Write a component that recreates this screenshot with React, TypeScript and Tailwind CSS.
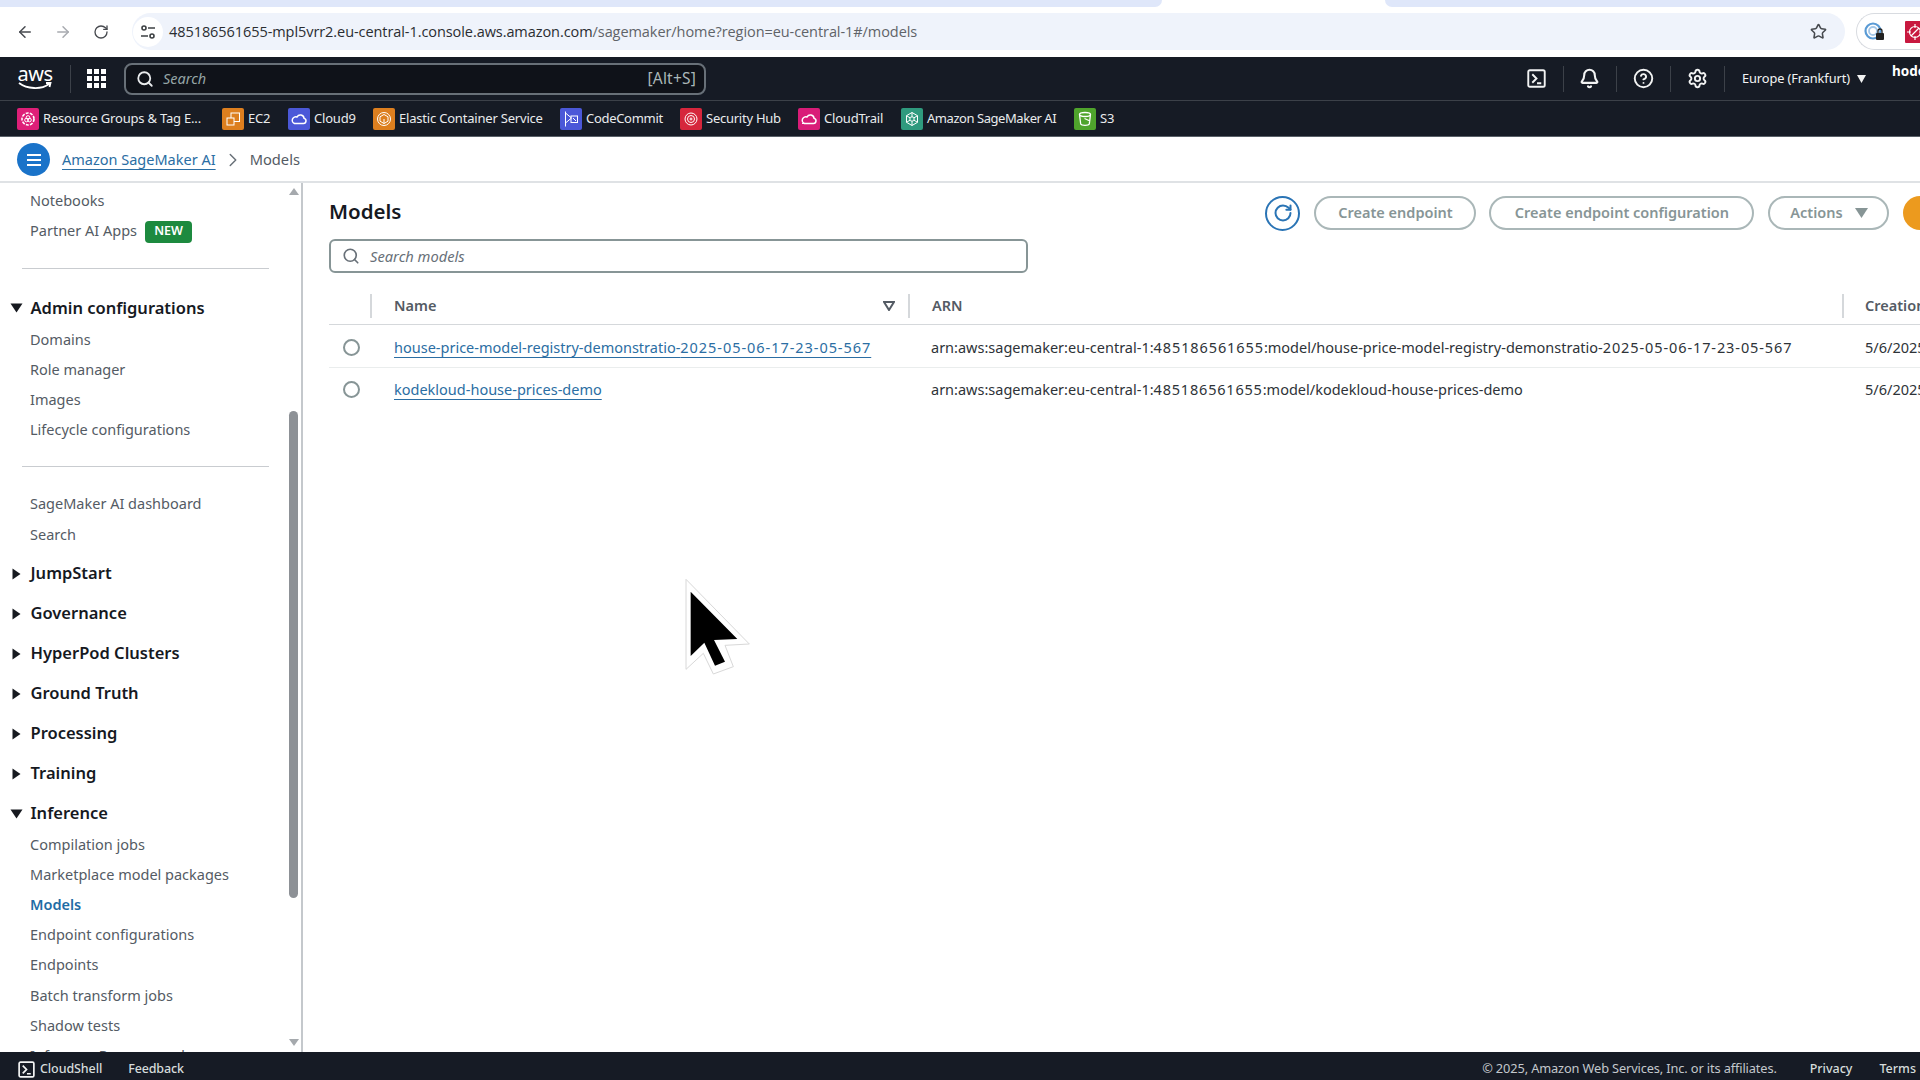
import React from "react";
import { ArrowLeft, ArrowRight, RotateCw, Star, Search, Bell, CircleHelp, Settings, ChevronRight } from "lucide-react";

const F = { fontFamily: "'Noto Sans', sans-serif" };

function Tune() {
  return (
    <svg width="18" height="18" viewBox="0 0 18 18" fill="none" stroke="#3c4043" strokeWidth="1.6">
      <circle cx="5" cy="5" r="2" />
      <path d="M9 5h7M2 13h7" />
      <circle cx="13" cy="13" r="2" />
    </svg>
  );
}

function TermIcon({ size = 18 }: { size?: number }) {
  return (
    <svg width={size} height={size} viewBox="0 0 18 18" fill="none" stroke="#f2f3f3" strokeWidth="1.8">
      <rect x="1.2" y="1.2" width="15.6" height="15.6" rx="1.5" />
      <path d="M5 5l4 4-4 4M9.5 13.500h4" />
    </svg>
  );
}

const cloud = "M6.500 15.500h9a2.600 2.600 0 0 0 .6-5.100A3.800 3.800 0 0 0 9 9a3.200 3.200 0 0 0-2.500 6.500z";

const favs: { label: string; c: string; w: number; gap: number; track: string; glyph: React.ReactNode }[] = [
  { label: "Resource Groups & Tag E...", c: "#de1f78", w: 158, gap: 21, track: "tracking-[-0.2px]", glyph: <g><circle cx="11" cy="11" r="6" strokeDasharray="3 1.200" strokeWidth="1.600" /><circle cx="9.500" cy="12" r="1.800" /><circle cx="12.500" cy="12" r="1.800" /><circle cx="11" cy="9.500" r="1.800" /></g> },
  { label: "EC2", c: "#dd7f1f", w: 22, gap: 18, track: "tracking-[-0.2px]", glyph: <g><rect x="9" y="5" width="8.500" height="8.500" /><rect x="5" y="10" width="7" height="7" fill="#dd7f1f" /></g> },
  { label: "Cloud9", c: "#4b58d8", w: 41, gap: 18, track: "tracking-[-0.2px]", glyph: <path d={cloud} strokeWidth="1.500" /> },
  { label: "Elastic Container Service", c: "#dd7f1f", w: 145, gap: 16, track: "tracking-[-0.2px]", glyph: <g><circle cx="11" cy="11" r="6.500" /><path d="M11 6.500l4 2.300v4.400l-4 2.300-4-2.300V8.800z" /><path d="M11 11v4.500" /></g> },
  { label: "CodeCommit", c: "#4b58d8", w: 77, gap: 17, track: "tracking-[-0.3px]", glyph: <g><path d="M5.500 3.500v15M5.500 5l6 5-6 5" /><rect x="11" y="8" width="6.500" height="6.500" /><path d="M13 10l3 3" /></g> },
  { label: "Security Hub", c: "#d6263c", w: 75, gap: 17, track: "tracking-[-0.25px]", glyph: <g><circle cx="11" cy="11" r="6" /><circle cx="11" cy="11" r="3.500" /><circle cx="11" cy="11" r="1" /></g> },
  { label: "CloudTrail", c: "#d91c78", w: 60, gap: 17, track: "tracking-[-0.2px]", glyph: <g><path d={cloud} strokeWidth="1.500" /><path d="M4 15.500h3" /></g> },
  { label: "Amazon SageMaker AI", c: "#2f9a7e", w: 131, gap: 16, track: "tracking-[-0.45px]", glyph: <g><path d="M11 4.500l5.500 3.200v6.600L11 17.500l-5.500-3.200V7.700z" /><circle cx="11" cy="11" r="2.200" /><path d="M11 4.500v4.300M11 13.200v4.300M5.500 7.700l3.600 2.200M16.500 14.300l-3.600-2.200M16.500 7.700l-3.600 2.200M5.500 14.300l3.600-2.200" /></g> },
  { label: "S3", c: "#4fa42c", w: 16, gap: 0, track: "tracking-[-0.2px]", glyph: <g><ellipse cx="11" cy="6.500" rx="5.500" ry="2" strokeWidth="1.300" /><path d="M5.500 6.500l1.200 9.500c1 1.700 7.600 1.700 8.600 0l1.200-9.500M10.500 10.500l5.500 2.500" strokeWidth="1.300" /></g> },
];

function Fav({ f }: { f: (typeof favs)[number] }) {
  return (
    <div className="flex items-center gap-[4px] shrink-0" style={{ marginRight: f.gap }}>
      <svg width="22" height="22" viewBox="0 0 22 22" fill="none" stroke="#fff" strokeWidth="1" className="shrink-0">
        <rect width="22" height="22" rx="2" fill={f.c} stroke="none" />
        {f.glyph}
      </svg>
      <span className={`text-[13px] leading-none whitespace-nowrap text-[#e9ebed] ${f.track}`} style={{ width: f.w }}>
        {f.label}
      </span>
    </div>
  );
}

function Item({ children, active }: { children: React.ReactNode; active?: boolean }) {
  return (
    <div className={`h-[30.2px] flex items-center pl-[30px] text-[14.5px] whitespace-nowrap ${active ? "text-[#1f6ca5] font-semibold" : "text-[#545b64]"}`}>
      {children}
    </div>
  );
}

function Section({ open, children }: { open?: boolean; children: React.ReactNode }) {
  return (
    <div className={`h-[40px] flex items-center pl-[10px] gap-[7.5px] text-[16.5px] font-semibold text-[#16191f] whitespace-nowrap ${open ? "-mb-[4px]" : ""}`}>
      {open ? (
        <svg width="13" height="10" viewBox="0 0 13 10"><path d="M0.500 0.500h12L6.500 9.500z" fill="#16191f" /></svg>
      ) : (
        <svg width="13" height="12" viewBox="0 0 13 12"><path d="M2.500 0.500l8 5.500-8 5.500z" fill="#16191f" /></svg>
      )}
      <span>{children}</span>
    </div>
  );
}

function Btn({ children, w, mr }: { children: React.ReactNode; w: string; mr: string }) {
  return (
    <div className={`${w} ${mr} h-[34px] shrink-0 rounded-full border-2 border-[#aab7b8] flex items-center justify-center gap-[12px] text-[14.5px] font-semibold text-[#879596]`}>
      {children}
    </div>
  );
}

function Radio() {
  return <div className="w-[17px] h-[17px] rounded-full border-2 border-[#879596] bg-white" />;
}

const LINK = "text-[#2b6ea3] underline underline-offset-[4px] whitespace-nowrap";
const CELL = "text-[#2e3338] whitespace-nowrap";

export default function App() {
  return (
    <div className="relative w-[1920px] h-[1080px] overflow-hidden bg-white flex flex-col" style={F}>
      {/* Browser tab strip */}
      <div className="h-[7px] shrink-0 flex bg-white">
        <div className="w-[1162px] bg-[#dfe7fa] rounded-br-[8px]" />
        <div className="w-[223px]" />
        <div className="flex-1 bg-[#dfe7fa] rounded-bl-[8px]" />
      </div>
      {/* Browser toolbar */}
      <div className="h-[50px] shrink-0 flex items-center pl-[16px] pb-[1px] bg-white">
        <ArrowLeft size={18} className="text-[#474a4f] shrink-0" strokeWidth={2} />
        <ArrowRight size={18} className="text-[#a8abb0] ml-[20px] shrink-0" strokeWidth={2} />
        <RotateCw size={16} className="text-[#474a4f] ml-[21px] shrink-0" strokeWidth={2} />
        <div className="ml-[23px] w-[1713px] h-[37px] shrink-0 rounded-full bg-[#eff3fb] flex items-center pr-[18px]">
          <div className="w-[30px] h-[30px] ml-[1px] rounded-full bg-white flex items-center justify-center shrink-0"><Tune /></div>
          <span className="ml-[6px] text-[14.500px] text-[#2a2d31] whitespace-nowrap tracking-[-0.07px]" style={{ fontFamily: "'Open Sans', sans-serif" }}>
            485186561655-mpl5vrr2.eu-central-1.console.aws.amazon.com<span className="text-[#5f6368]">/sagemaker/home?region=eu-central-1#/models</span>
          </span>
          <Star size={17} className="ml-auto text-[#474a4f]" strokeWidth={2.2} />
        </div>
        <div className="ml-[11px] h-[37px] flex-1 rounded-l-full border border-[#d8dbe0] border-r-0 flex items-center pl-[7px] gap-[19px] overflow-hidden">
          <svg width="22" height="22" viewBox="0 0 22 22" fill="none" className="shrink-0">
            <circle cx="9" cy="10" r="7.500" stroke="#5a9bd5" strokeWidth="2.200" />
            <circle cx="9" cy="10" r="4" stroke="#a5c8e8" strokeWidth="1.800" />
            <rect x="12" y="12" width="8" height="7" rx="1" fill="#222" />
            <path d="M14 12V10a2 2 0 0 1 4 0v2" stroke="#222" strokeWidth="1.300" />
          </svg>
          <svg width="20" height="22" viewBox="0 0 20 22" fill="none" className="shrink-0">
            <rect width="20" height="22" rx="1" fill="#c8193f" />
            <circle cx="10" cy="11" r="5.500" stroke="#fff" strokeWidth="1.200" />
            <path d="M6 15l8-8M10 3v4M10 15v4M2 11h4M14 11h4" stroke="#fff" strokeWidth="1.200" />
          </svg>
        </div>
      </div>
      {/* AWS top bar */}
      <div className="h-[44px] shrink-0 bg-[#161b25] border-b border-[#3c4149] flex items-center relative text-[#f2f3f3]">
        <div className="w-[70px] flex flex-col items-center shrink-0 leading-none">
          <span className="text-[20px] font-normal leading-[16px] tracking-[-0.5px] text-white">aws</span>
          <svg width="34" height="9" viewBox="0 0 34 9" fill="none"><path d="M1 1c8 6 22 7 30 1M28 1h4.500l-1 4" stroke="#fff" strokeWidth="1.800" /></svg>
        </div>
        <div className="w-px h-[28px] bg-[#3c4149] shrink-0" />
        <div className="ml-[16px] grid grid-cols-3 gap-[2px] shrink-0">
          {Array.from({ length: 9 }).map((_, i) => (
            <div key={i} className="w-[5px] h-[5px] bg-white" />
          ))}
        </div>
        <div className="ml-[18px] w-[582px] h-[32px] shrink-0 rounded-[8px] border-2 border-[#687078] bg-[#0f1219] flex items-center pl-[10px] pr-[8px]">
          <Search size={18} className="text-[#e9ebed] shrink-0" strokeWidth={2.4} />
          <span className="ml-[9px] text-[14.500px] italic text-[#95a5a6]">Search</span>
          <span className="ml-auto text-[15.500px] text-[#aab7b8] tracking-[0.2px]">[Alt+S]</span>
        </div>
        <div className="ml-[820px] w-[20px] flex justify-center shrink-0"><TermIcon size={19} /></div>
        <div className="ml-[17px] w-px h-[26px] bg-[#3c4149] shrink-0" />
        <Bell size={21} className="ml-[15px] shrink-0" strokeWidth={2.4} />
        <div className="ml-[16px] w-px h-[26px] bg-[#3c4149] shrink-0" />
        <CircleHelp size={21} className="ml-[16px] shrink-0" strokeWidth={2.2} />
        <div className="ml-[16px] w-px h-[26px] bg-[#3c4149] shrink-0" />
        <Settings size={21} className="ml-[16px] shrink-0" strokeWidth={2.2} />
        <div className="ml-[16px] w-px h-[26px] bg-[#3c4149] shrink-0" />
        <span className="ml-[17px] text-[12.800px] whitespace-nowrap tracking-[-0.1px]">Europe (Frankfurt)</span>
        <svg width="9" height="8" viewBox="0 0 9 8" className="ml-[7px] shrink-0"><path d="M0 0h9L4.500 8z" fill="#f2f3f3" /></svg>
        <span className="absolute left-[1892px] top-[4px] text-[13.500px] font-bold text-white">hode</span>
      </div>
      {/* Favorites */}
      <div className="h-[36px] shrink-0 bg-[#161b25] border-b border-[#596068] flex items-center pl-[17px] overflow-hidden">
        {favs.map((f) => <Fav key={f.label} f={f} />)}
      </div>
      {/* Breadcrumbs */}
      <div className="h-[46px] shrink-0 bg-white border-b-2 border-[#dfe2e5] flex items-center pl-[17px] pt-[1px]">
        <div className="w-[33px] h-[33px] rounded-full bg-[#1a73c9] flex flex-col items-center justify-center gap-[3px] shrink-0">
          <div className="w-[14px] h-[2px] bg-white" />
          <div className="w-[14px] h-[2px] bg-white" />
          <div className="w-[14px] h-[2px] bg-white" />
        </div>
        <span className="ml-[12px] text-[14.500px] text-[#2b6ea3] underline underline-offset-[4px] decoration-[#2b6ea3]">Amazon SageMaker AI</span>
        <ChevronRight size={22} className="ml-[6px] text-[#687078]" strokeWidth={1.6} />
        <span className="ml-[6px] text-[14.700px] text-[#545b64]">Models</span>
      </div>
      {/* Body */}
      <div className="flex-1 min-h-0 flex">
        <aside className="relative w-[303px] shrink-0 border-r-2 border-[#c4c8cc] overflow-hidden">
          <div className="pt-[3px]">
            <Item>Notebooks</Item>
            <Item>
              Partner AI Apps
              <span className="ml-[8px] mt-[1px] h-[22px] w-[47px] rounded-[4px] bg-[#1d8a3f] text-white text-[12.500px] font-semibold flex items-center justify-center">NEW</span>
            </Item>
            <div className="mt-[22px] ml-[22px] w-[247px] h-px bg-[#c9ccd0]" />
            <div className="mt-[19px]"><Section open>Admin configurations</Section></div>
            <Item>Domains</Item>
            <Item>Role manager</Item>
            <Item>Images</Item>
            <Item>Lifecycle configurations</Item>
            <div className="mt-[21px] ml-[22px] w-[247px] h-px bg-[#c9ccd0]" />
            <div className="mt-[22px]">
              <Item>SageMaker AI dashboard</Item>
              <Item>Search</Item>
            </div>
            <div className="mt-[4px]">
              <Section>JumpStart</Section>
              <Section>Governance</Section>
              <Section>HyperPod Clusters</Section>
              <Section>Ground Truth</Section>
              <Section>Processing</Section>
              <Section>Training</Section>
              <Section open>Inference</Section>
            </div>
            <Item>Compilation jobs</Item>
            <Item>Marketplace model packages</Item>
            <Item active>Models</Item>
            <Item>Endpoint configurations</Item>
            <Item>Endpoints</Item>
            <Item>Batch transform jobs</Item>
            <Item>Shadow tests</Item>
            <Item>Inference Recommender</Item>
          </div>
          {/* scrollbar overlay */}
          <div className="absolute right-0 top-0 bottom-0 w-[13px]">
            <svg width="12" height="8" viewBox="0 0 12 8" className="absolute left-0 top-[5px]"><path d="M6 0l5 7H1z" fill="#a5a9ad" /></svg>
            <div className="absolute left-[1px] top-[228px] w-[9px] h-[487px] rounded-full bg-[#8d9196]" />
            <svg width="12" height="8" viewBox="0 0 12 8" className="absolute left-0 top-[855px]"><path d="M6 8l5-7H1z" fill="#a5a9ad" /></svg>
          </div>
        </aside>
        <main className="flex-1 min-w-0 overflow-hidden pl-[26px]">
          <div className="pt-[13px] flex items-center h-[47px]">
            <h1 className="text-[20.500px] font-semibold text-[#16191f] leading-none -translate-y-[2px]">Models</h1>
            <div className="ml-[864px] w-[35px] h-[35px] shrink-0 rounded-full border-2 border-[#2a74b5] flex items-center justify-center mr-[14px]">
              <RotateCw size={20} className="text-[#2a74b5]" strokeWidth={2.4} />
            </div>
            <Btn w="w-[162px]" mr="mr-[13px]">Create endpoint</Btn>
            <Btn w="w-[265px]" mr="mr-[14px]">Create endpoint configuration</Btn>
            <Btn w="w-[121px]" mr="mr-[14px]">
              Actions
              <svg width="13" height="10" viewBox="0 0 13 10"><path d="M0 0h13L6.500 10z" fill="#879596" /></svg>
            </Btn>
            <div className="w-[80px] h-[34px] shrink-0 rounded-full bg-[#ec9a1e]" />
          </div>
          <div className="mt-[9px] w-[699px] h-[34px] rounded-[6px] border-2 border-[#879596] flex items-center pl-[11px]">
            <Search size={18} className="text-[#687078]" strokeWidth={2.2} />
            <span className="ml-[10px] text-[14.700px] italic text-[#687078]">Search models</span>
          </div>
          <div className="grid grid-cols-[43px_538px_934px_200px] h-[52px] border-b border-[#d5d8db] items-center text-[14.500px] font-semibold text-[#545b64] w-[1600px] pt-[14px]">
            <div className="h-[24px] border-r-2 border-[#d5d8db]" />
            <div className="h-[24px] border-r-2 border-[#d5d8db] flex items-center pl-[22px] pr-[13px] justify-between">
              <span>Name</span>
              <svg width="12" height="10" viewBox="0 0 12 10" fill="none"><path d="M1 1h10L6 9z" stroke="#545b64" strokeWidth="2" /></svg>
            </div>
            <div className="h-[24px] border-r-2 border-[#d5d8db] flex items-center pl-[22px]">ARN</div>
            <div className="pl-[21px]">Creation time</div>
          </div>
          <div className="grid grid-cols-[43px_538px_934px_200px] h-[43px] border-b border-[#eaeded] items-center text-[14.500px] w-[1600px]">
            <div className="flex justify-center pl-[2px] pt-[3px]"><Radio /></div>
            <div className="pl-[22px] pt-[3px]">
              <span className={LINK}>house-price-model-registry-demonstratio-<span className="tracking-[0.95px]">2025-05-06-17-23-05-567</span></span>
            </div>
            <div className={`pl-[21px] pt-[3px] ${CELL}`}>arn:aws:sagemaker:eu-central-1:<span className="tracking-[0.9px]">485186561655</span>:model/house-price-model-registry-demonstratio-<span className="tracking-[0.9px]">2025-05-06-17-23-05-567</span></div>
            <div className={`pl-[21px] pt-[3px] ${CELL}`}>5/6/2025</div>
          </div>
          <div className="grid grid-cols-[43px_538px_934px_200px] h-[42px] items-center text-[14.500px] w-[1600px]">
            <div className="flex justify-center pl-[2px]"><Radio /></div>
            <div className="pl-[22px] pt-[1px]"><span className={LINK}>kodekloud-house-prices-demo</span></div>
            <div className={`pl-[21px] pt-[1px] ${CELL}`}>arn:aws:sagemaker:eu-central-1:<span className="tracking-[0.8px]">485186561655</span>:model/kodekloud-house-prices-demo</div>
            <div className={`pl-[21px] pt-[1px] ${CELL}`}>5/6/2025</div>
          </div>
        </main>
      </div>
      {/* Footer */}
      <div className="h-[28px] shrink-0 bg-[#161b25] flex items-center relative z-10 pl-[18px] pt-[6px] text-[12.500px] text-[#d5dbdb]">
        <TermIcon size={17} />
        <span className="ml-[5px] font-medium tracking-[-0.1px]">CloudShell</span>
        <span className="ml-[26px] font-medium tracking-[-0.15px]">Feedback</span>
        <span className="ml-auto text-[12.800px] text-[#c3c8cc] tracking-[-0.13px]">© 2025, Amazon Web Services, Inc. or its affiliates.</span>
        <span className="ml-[33px] font-medium">Privacy</span>
        <span className="ml-[27px] mr-[4px] font-medium">Terms</span>
      </div>
      {/* Video cursor overlay */}
      <svg width="110" height="110" viewBox="0 0 330 330" className="absolute left-[660px] top-[570px]">
        <path d="M78 28L268 222L195 226L220 290L160 312L130 250L78 298z" fill="#fff" stroke="#d8d8d8" strokeWidth="3" />
        <path d="M92 65L232 207L162 210L195 275L165 287L133 218L92 258z" fill="#000" />
      </svg>
    </div>
  );
}
